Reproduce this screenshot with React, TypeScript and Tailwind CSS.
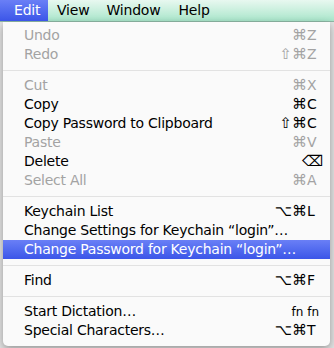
const font = { fontFamily: '"Lucida Grande", "DejaVu Sans", sans-serif' };

type Item =
  | { sep: true }
  | { label: string; mods?: string; keyc?: string; disabled?: boolean; active?: boolean; small?: boolean };

const items: Item[] = [
  { label: "Undo", mods: "⌘", keyc: "Z", disabled: true },
  { label: "Redo", mods: "⇧⌘", keyc: "Z", disabled: true },
  { sep: true },
  { label: "Cut", mods: "⌘", keyc: "X", disabled: true },
  { label: "Copy", mods: "⌘", keyc: "C" },
  { label: "Copy Password to Clipboard", mods: "⇧⌘", keyc: "C" },
  { label: "Paste", mods: "⌘", keyc: "V", disabled: true },
  { label: "Delete", keyc: "⌫" },
  { label: "Select All", mods: "⌘", keyc: "A", disabled: true },
  { sep: true },
  { label: "Keychain List", mods: "⌥⌘", keyc: "L" },
  { label: "Change Settings for Keychain “login”…" },
  { label: "Change Password for Keychain “login”…", active: true },
  { sep: true },
  { label: "Find", mods: "⌥⌘", keyc: "F" },
  { sep: true },
  { label: "Start Dictation…", small: true },
  { label: "Special Characters…", mods: "⌥⌘", keyc: "T" },
];

function Row({ item }: { item: Extract<Item, { label: string }> }) {
  const color = item.active ? "text-white" : item.disabled ? "text-[#a3a3a3]" : "text-black";
  return (
    <div
      className={`flex h-[19px] items-center pl-[21px] pr-[11px] text-[14px] ${color} ${
        item.active ? "bg-gradient-to-b from-[#6a7ff6] to-[#3c55e8]" : ""
      }`}
    >
      <span className="flex-1 whitespace-nowrap tracking-[-0.25px]">{item.label}</span>
      {item.small ? (
        <span className="text-[12px]">fn fn</span>
      ) : item.keyc ? (
        <span className="flex items-center">
          <span className="text-[15px]">{item.mods}</span>
          <span className={item.keyc === "⌫" ? "w-[17px] text-[15px]" : "w-[12px]"}>{item.keyc}</span>
        </span>
      ) : null}
    </div>
  );
}

export default function App() {
  return (
    <div className="relative h-[348px] w-[334px] overflow-hidden bg-[#e4e4e4]" style={font}>
      <div className="flex h-[22px] items-center border-b border-[#8fb8a6] bg-gradient-to-b from-[#e8f8f0] to-[#a9e6cb] text-[14px] tracking-[-0.2px] text-black">
        <div className="flex h-full w-[48px] items-center bg-gradient-to-b from-[#6a7ff6] to-[#3c55e8] pl-[14px] text-white">
          Edit
        </div>
        <span className="ml-[9px]">View</span>
        <span className="ml-[17px]">Window</span>
        <span className="ml-[18px]">Help</span>
      </div>
      <div className="ml-[3px] w-[327px] rounded-b-[5px] bg-[#fafafa] pt-[4px] pb-[6px] shadow-[0_3px_8px_rgba(0,0,0,0.35)]">
        {items.map((it, i) =>
          "sep" in it ? (
            <div key={i} className="flex h-[12px] items-center">
              <div className="h-px w-full bg-[#e2e2e2]" />
            </div>
          ) : (
            <Row key={i} item={it} />
          )
        )}
      </div>
    </div>
  );
}
